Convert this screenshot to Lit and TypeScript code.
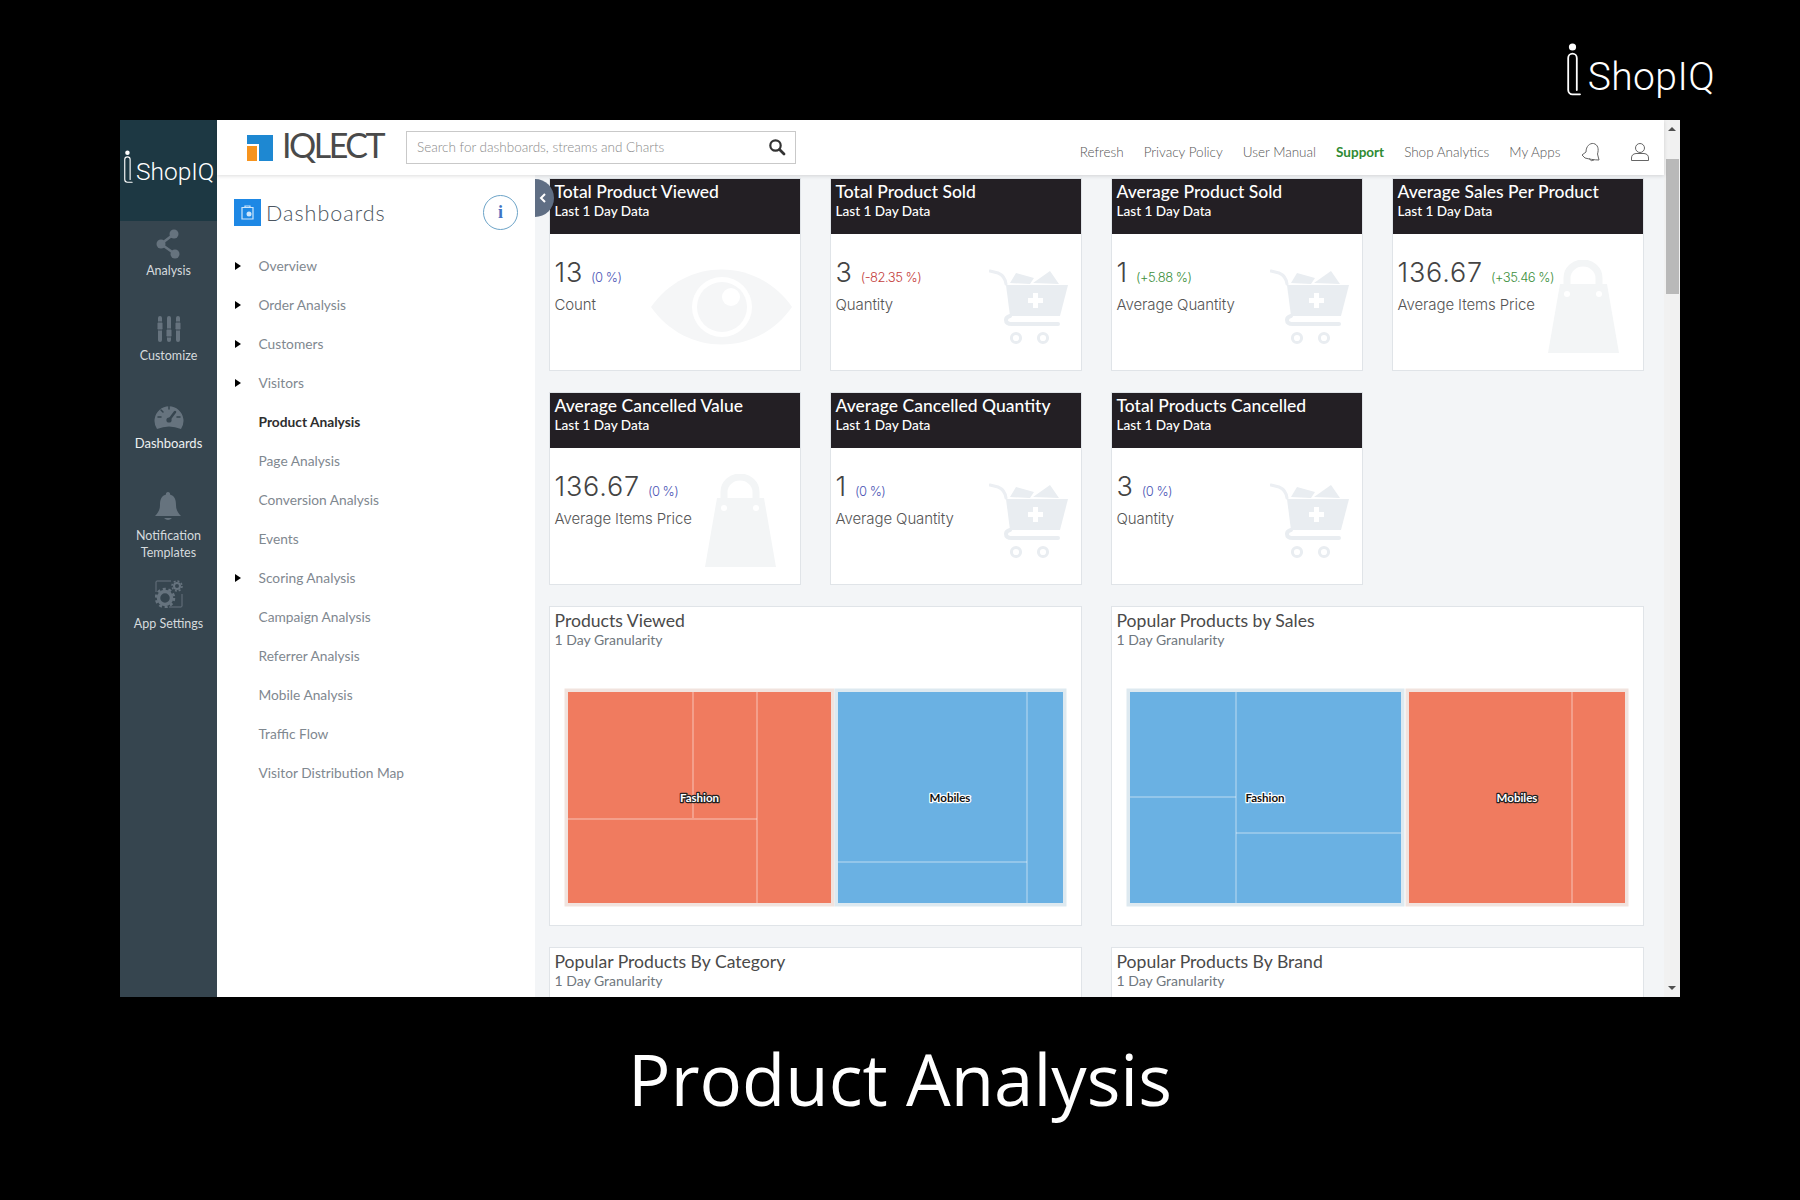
import { LitElement, html, css, svg } from 'lit';
import { customElement } from 'lit/decorators.js';

const cartIcon = html`<svg class="mark cart" width="79" height="76" viewBox="0 0 79 76">
  <path d="M1 2 L9 4 Q16 7 17 15" fill="none" stroke="#eceff3" stroke-width="3" stroke-linecap="round"/>
  <path d="M21 14 L27 4 L45 9 L41 15 Z M44 14 L61 2 L70 15 Z" fill="#e9edf1"/>
  <path d="M17 16 H79 L71 47 H21 Z" fill="#e9edf1"/>
  <path d="M44 24 h5 v5 h5 v5 h-5 v5 h-5 v-5 h-5 v-5 h5 Z" fill="#fff"/>
  <path d="M21 47 Q17 48 17 51 Q17 55 23 55 H69" fill="none" stroke="#e9edf1" stroke-width="4" stroke-linecap="round"/>
  <circle cx="27" cy="69" r="4.6" fill="none" stroke="#e9edf1" stroke-width="3"/>
  <circle cx="54" cy="69" r="4.6" fill="none" stroke="#e9edf1" stroke-width="3"/>
</svg>`;

const bagIcon = html`<svg class="mark bag" width="71" height="94" viewBox="0 0 71 94">
  <path d="M12 24 H59 L71 93 H0 Z" fill="#f3f5f6"/>
  <path d="M19 33 V18 a16 15 0 0 1 32 0 V33" fill="none" stroke="#f3f5f6" stroke-width="7"/>
  <circle cx="19" cy="34" r="3" fill="#fff"/>
  <circle cx="51" cy="34" r="3" fill="#fff"/>
</svg>`;

const eyeIcon = html`<svg class="mark eye" width="141" height="76" viewBox="0 0 141 76">
  <path d="M0 38 C35 -12 106 -12 141 38 C106 88 35 88 0 38 Z" fill="#f5f6f7"/>
  <circle cx="71" cy="38" r="30" fill="#fff"/>
  <circle cx="71" cy="38" r="25" fill="#f5f6f7"/>
  <circle cx="80" cy="28" r="9" fill="#fff"/>
</svg>`;

// big and small wordmark share the same drawn "i"
const logoMark = html`<svg class="logo-i" viewBox="0 0 16 54">
  <circle cx="5.5" cy="4" r="3.6" fill="currentColor"/>
  <path d="M1.2 15 a4.3 4.3 0 0 1 8.6 0 V47 M1.2 15 V47 a4.3 4.3 0 0 0 4.3 4.3 H13" fill="none" stroke="currentColor" stroke-width="1.8" stroke-linecap="round"/>
</svg>`;

const cards = [
  { title: 'Total Product Viewed', value: '13', delta: '(0 %)', tone: 'flat', label: 'Count', icon: eyeIcon },
  { title: 'Total Product Sold', value: '3', delta: '(-82.35 %)', tone: 'down', label: 'Quantity', icon: cartIcon },
  { title: 'Average Product Sold', value: '1', delta: '(+5.88 %)', tone: 'up', label: 'Average Quantity', icon: cartIcon },
  { title: 'Average Sales Per Product', value: '136.67', delta: '(+35.46 %)', tone: 'up', label: 'Average Items Price', icon: bagIcon },
  { title: 'Average Cancelled Value', value: '136.67', delta: '(0 %)', tone: 'flat', label: 'Average Items Price', icon: bagIcon },
  { title: 'Average Cancelled Quantity', value: '1', delta: '(0 %)', tone: 'flat', label: 'Average Quantity', icon: cartIcon },
  { title: 'Total Products Cancelled', value: '3', delta: '(0 %)', tone: 'flat', label: 'Quantity', icon: cartIcon },
];

const menu = [
  { name: 'Overview', arrow: true },
  { name: 'Order Analysis', arrow: true },
  { name: 'Customers', arrow: true },
  { name: 'Visitors', arrow: true },
  { name: 'Product Analysis', active: true },
  { name: 'Page Analysis' },
  { name: 'Conversion Analysis' },
  { name: 'Events' },
  { name: 'Scoring Analysis', arrow: true },
  { name: 'Campaign Analysis' },
  { name: 'Referrer Analysis' },
  { name: 'Mobile Analysis' },
  { name: 'Traffic Flow' },
  { name: 'Visitor Distribution Map' },
];

const links = ['Refresh', 'Privacy Policy', 'User Manual', 'Support', 'Shop Analytics', 'My Apps'];

const ORANGE = '#f07b5f';
const BLUE = '#6ab1e3';
const HALO: Record<string, string> = { [ORANGE]: '#f1e3de', [BLUE]: '#dde9f0' };

type Group = {
  x: number; w: number; fill: string; label: string; labelX: number;
  lines: number[][];
};

// coordinates are relative to the 503x219 plot
const viewed: Group[] = [
  { x: 4, w: 263, fill: ORANGE, label: 'Fashion', labelX: 135.5, lines: [[129, 4, 129, 130], [193, 4, 193, 215], [4, 131, 193, 131]] },
  { x: 274, w: 225, fill: BLUE, label: 'Mobiles', labelX: 386, lines: [[463, 4, 463, 215], [274, 174, 463, 174]] },
];
const sales: Group[] = [
  { x: 4, w: 271, fill: BLUE, label: 'Fashion', labelX: 139, lines: [[110, 4, 110, 215], [4, 109, 110, 109], [110, 145, 275, 145]] },
  { x: 283, w: 216, fill: ORANGE, label: 'Mobiles', labelX: 391, lines: [[446, 4, 446, 215]] },
];

const treemap = (groups: Group[]) => html`<svg class="treemap" width="503" height="219" viewBox="0 0 503 219">
  ${groups.map(g => svg`<rect x=${g.x} y="4" width=${g.w} height="211" fill="none" stroke=${HALO[g.fill]} stroke-width="7"/>`)}
  ${groups.map(g => svg`
    <rect x=${g.x} y="4" width=${g.w} height="211" fill=${g.fill}/>
    ${g.lines.map(l => svg`<line x1=${l[0]} y1=${l[1]} x2=${l[2]} y2=${l[3]} stroke="#fff" stroke-opacity=".55"/>`)}
    <text class=${g.fill === ORANGE ? 'tag on-orange' : 'tag on-blue'} x=${g.labelX} y="114" text-anchor="middle">${g.label}</text>
  `)}
</svg>`;

@customElement('app-root')
export class AppRoot extends LitElement {
  static styles = css`
    :host {
      display: block;
      width: 1800px;
      height: 1200px;
      background: #000;
      font-family: Lato, 'Liberation Sans', sans-serif;
      color: #444;
      overflow: hidden;
    }
    .band {
      height: 120px;
      box-sizing: border-box;
      padding: 43px 85px 0 0;
      display: flex;
      justify-content: flex-end;
    }
    .logo {
      display: flex;
      color: #fff;
      font-family: Roboto, sans-serif;
      font-weight: 300;
    }
    .logo-i { display: block; flex: none; }
    .logo.big { font-size: 39px; line-height: 46px; gap: 5px; letter-spacing: .4px; }
    .logo.big .logo-i { width: 16px; height: 54px; }
    .logo.big span { padding-top: 11px; }
    .logo.small { font-size: 24.5px; line-height: 28px; gap: 2px; }
    .logo.small .logo-i { width: 10px; height: 34px; }
    .logo.small span { padding-top: 8px; }

    .frame {
      width: 1560px;
      height: 877px;
      margin-left: 120px;
      display: flex;
      background: #fff;
    }
    .side {
      width: 97px;
      flex: none;
      background: #36454f;
      color: #d5dadd;
      display: flex;
      flex-direction: column;
      align-items: center;
      font-size: 12.5px;
    }
    .side-logo {
      align-self: stretch;
      height: 101px;
      box-sizing: border-box;
      background: #1d3843;
      padding: 30px 0 0 4px;
    }
    .side-item {
      display: flex;
      flex-direction: column;
      align-items: center;
      text-align: center;
      line-height: 17px;
    }
    .side-item svg { display: block; }
    .side-item.analysis { margin-top: 8px; gap: 3px; }
    .side-item.customize { margin-top: 36px; gap: 4px; }
    .side-item.dashboards { margin-top: 39px; gap: 4px; font-size: 13px; color: #eef1f2; }
    .side-item.notify { margin-top: 39px; gap: 6px; }
    .side-item.settings { margin-top: 19px; gap: 7px; }

    .main { flex: 1; min-width: 0; display: flex; flex-direction: column; }
    .top {
      height: 55px;
      flex: none;
      display: flex;
      align-items: center;
      background: #fff;
      box-shadow: 0 1px 4px rgba(0, 0, 0, .14);
      position: relative;
      z-index: 2;
    }
    .brand { display: flex; align-items: center; margin-left: 30px; gap: 9px; width: 159px; }
    .brand b {
      font-weight: 400;
      font-size: 34px;
      letter-spacing: -2.5px;
      color: #4a4a4a;
      line-height: 34px;
      padding-bottom: 6px;
    }
    .search {
      width: 390px;
      height: 33px;
      margin-bottom: 1px;
      box-sizing: border-box;
      border: 1px solid #c9c9c9;
      display: flex;
      align-items: center;
      padding: 0 9px 0 10px;
    }
    .search input {
      flex: 1;
      border: 0;
      outline: 0;
      padding: 0 0 1px;
      font: 300 13.5px Lato, sans-serif;
      color: #777;
    }
    .search input::placeholder { color: #8a8a8a; opacity: 1; }
    .links {
      margin-left: auto;
      padding: 8px 14.5px 0 0;
      display: flex;
      align-items: center;
      font-size: 13.5px;
      font-weight: 300;
      color: #555;
      gap: 20px;
    }
    .links .support { font-weight: 700; color: #2f8b33; }
    .links svg { display: block; }
    .links .bell { margin-left: 0; }
    .links .user { margin-left: 9px; }

    .body { flex: 1; min-height: 0; display: flex; }
    .panel { width: 318px; flex: none; background: #fff; box-sizing: border-box; padding: 20px 17px 0; }
    .panel-head { display: flex; align-items: center; height: 34px; margin-bottom: 17px; }
    .panel-icon { width: 27px; height: 27px; background: #1e88e5; display: flex; align-items: center; justify-content: center; }
    .panel-head h2 {
      font-size: 21.5px;
      font-weight: 300;
      letter-spacing: 1px;
      margin: 2px 0 0 5px;
      color: #4b5560;
    }
    .info {
      margin-left: auto;
      width: 33px;
      height: 33px;
      border: 1px solid #6da4c8;
      border-radius: 50%;
      display: flex;
      align-items: center;
      justify-content: center;
      font: 700 18px 'Liberation Serif', serif;
      color: #3f73c4;
    }
    .menu { list-style: none; margin: 0; padding: 0; }
    .menu li {
      height: 39px;
      display: flex;
      align-items: center;
      padding-left: 24.5px;
      font-size: 13.75px;
      color: #7f8890;
      position: relative;
    }
    .menu li.active { color: #2e2e2e; font-weight: 700; }
    .menu li.arrow::before {
      content: '';
      position: absolute;
      left: 1px;
      top: 16px;
      border-left: 6px solid #000;
      border-top: 4px solid transparent;
      border-bottom: 4px solid transparent;
    }

    .content {
      flex: 1;
      min-width: 0;
      background: #f3f5f7;
      position: relative;
      overflow: hidden;
      box-sizing: border-box;
      padding: 3px 0 0 14px;
    }
    .collapse {
      position: absolute;
      left: 0;
      top: 4px;
      width: 19px;
      height: 38px;
      border-radius: 0 19px 19px 0;
      background: #5f6e84;
      z-index: 1;
      display: flex;
      align-items: center;
      padding-left: 4px;
      box-sizing: border-box;
    }
    .grid {
      display: grid;
      grid-template-columns: repeat(4, 251.5px);
      grid-auto-rows: min-content;
      column-gap: 29.5px;
      row-gap: 21px;
    }
    .card {
      height: 193px;
      box-sizing: border-box;
      background: #fff;
      border: 1px solid #e0e4e8;
      position: relative;
      overflow: hidden;
    }
    .card header {
      height: 56px;
      margin: -1px -1px 0;
      background: #231f24;
      color: #fff;
      box-sizing: border-box;
      padding: 2px 5.5px 0;
    }
    .card h3 { margin: 0; font-size: 17.5px; font-weight: 500; line-height: 24px; }
    .card header p { margin: 0; font-size: 13.6px; line-height: 15px; font-weight: 500; }
    .stat { padding: 21px 4.5px 0; position: relative; z-index: 1; }
    .nums { display: flex; align-items: baseline; gap: 8px; color: #444; }
    .nums strong { font: 300 27px/36px Inter, sans-serif; letter-spacing: .8px; }
    .nums em { font: 300 13px Inter, sans-serif; letter-spacing: -.5px; }
    .flat { color: #4b55b5; }
    .down { color: #c4403c; }
    .up { color: #3d8f3d; }
    .stat p { margin: 4px 0 0; font: 300 15px/20px Inter, sans-serif; color: #555; letter-spacing: -.1px; }
    .mark { position: absolute; }
    .mark.cart { right: 13px; top: 90px; }
    .mark.bag { right: 24px; top: 81px; }
    .mark.eye { right: 8px; top: 90px; }

    .chart {
      grid-column: span 2;
      height: 320px;
      box-sizing: border-box;
      background: #fff;
      border: 1px solid #e0e4e8;
      padding: 2px 4.5px 0;
    }
    .chart h3 { margin: 0; font-size: 17.6px; font-weight: 400; line-height: 23px; color: #4a4a4a; }
    .chart p { margin: 0; font-size: 14px; line-height: 15px; color: #6f777e; }
    .treemap { display: block; margin: 41px 0 0 9.5px; }
    .tag {
      font: 700 11.5px Lato, sans-serif;
      paint-order: stroke;
      stroke-width: 2.5px;
      stroke-linejoin: round;
    }
    .tag.on-orange { fill: #fff; stroke: #222; }
    .tag.on-blue { fill: #111; stroke: #fff; }

    .bar {
      width: 16px;
      flex: none;
      background: #f1f1f1;
      display: flex;
      flex-direction: column;
      align-items: center;
      padding-top: 7px;
      box-sizing: border-box;
      position: relative;
    }
    .up-arrow, .down-arrow {
      width: 0;
      border-left: 4px solid transparent;
      border-right: 4px solid transparent;
    }
    .up-arrow { border-bottom: 4px solid #505050; }
    .down-arrow { border-top: 4px solid #505050; margin-top: auto; margin-bottom: 7px; }
    .thumb { width: 13px; height: 135px; background: #b9b9b9; margin-top: 28px; }

    .caption {
      text-align: center;
      color: #fff;
      font: 400 70.7px/1 'Open Sans', sans-serif;
      margin-top: 47px;
    }
  `;

  renderCard(c: (typeof cards)[number]) {
    return html`<section class="card">
      <header>
        <h3>${c.title}</h3>
        <p>Last 1 Day Data</p>
      </header>
      ${c.icon}
      <div class="stat">
        <div class="nums"><strong>${c.value}</strong><em class=${c.tone}>${c.delta}</em></div>
        <p>${c.label}</p>
      </div>
    </section>`;
  }

  render() {
    const ic = '#66737e';
    return html`
      <div class="band">
        <div class="logo big">${logoMark}<span>ShopIQ</span></div>
      </div>
      <div class="frame">
        <aside class="side">
          <div class="side-logo"><div class="logo small">${logoMark}<span>ShopIQ</span></div></div>
          <div class="side-item analysis">
            <svg width="26" height="30" viewBox="0 0 26 30">
              <path d="M19 5 L6 15 L20 25" fill="none" stroke=${ic} stroke-width="2.5"/>
              <circle cx="19" cy="5" r="4.5" fill=${ic}/><circle cx="6" cy="15" r="4.5" fill=${ic}/><circle cx="20" cy="25" r="4.5" fill=${ic}/>
            </svg>
            Analysis
          </div>
          <div class="side-item customize">
            <svg width="26" height="28" viewBox="0 0 26 28">
              <g fill=${ic}>
                <rect x="2" y="1" width="4" height="26" rx="2"/><rect x="11" y="1" width="4" height="26" rx="2"/><rect x="20" y="1" width="4" height="26" rx="2"/>
                <rect x="1" y="7" width="6" height="8" rx="1.5" stroke="#36454f"/><rect x="10" y="14" width="6" height="8" rx="1.5" stroke="#36454f"/><rect x="19" y="7" width="6" height="8" rx="1.5" stroke="#36454f"/>
              </g>
            </svg>
            Customize
          </div>
          <div class="side-item dashboards">
            <svg width="30" height="28" viewBox="0 0 30 28">
              <path d="M3 26 A14.5 14.5 0 1 1 27 26 Q15 21 3 26 Z" fill=${ic}/>
              <path d="M15 17 L21 9" stroke="#36454f" stroke-width="2.5" stroke-linecap="round"/>
              <circle cx="15" cy="17" r="2.6" fill="#36454f"/>
              <g stroke="#36454f" stroke-width="1.5" stroke-linecap="round"><path d="M15 3v3M7 7l2 2M4 14h3M26 14h-3"/></g>
            </svg>
            Dashboards
          </div>
          <div class="side-item notify">
            <svg width="26" height="30" viewBox="0 0 26 30">
              <path d="M13 1 a2 2 0 0 1 2 2.5 C20 5 21 9 21 14 C21 19 23 22 26 25 H0 C3 22 5 19 5 14 C5 9 6 5 11 3.5 A2 2 0 0 1 13 1 Z" fill=${ic}/>
              <path d="M9 27 H17 Q13 31 9 27 Z" fill=${ic}/>
            </svg>
            <span>Notification<br />Templates</span>
          </div>
          <div class="side-item settings">
            <svg width="28" height="28" viewBox="0 0 28 28">
              <path d="M16 1 H2 Q1 1 1 2 V12 M27 14 V26 Q27 27 26 27 H14" fill="none" stroke=${ic}/>
              <circle cx="10" cy="18" r="6.5" fill="none" stroke=${ic} stroke-width="3.5"/>
              <circle cx="10" cy="18" r="9" fill="none" stroke=${ic} stroke-width="2.5" stroke-dasharray="3 2.7"/>
              <circle cx="22" cy="6" r="3" fill="none" stroke=${ic} stroke-width="2"/>
              <circle cx="22" cy="6" r="5" fill="none" stroke=${ic} stroke-width="1.5" stroke-dasharray="2 1.9"/>
            </svg>
            App Settings
          </div>
        </aside>
        <div class="main">
          <div class="top">
            <div class="brand">
              <svg width="26" height="26" viewBox="0 0 26 26">
                <path d="M0 0 H26 V26 H12 V9 H0 Z" fill="#1e88d2"/>
                <rect y="11" width="10" height="15" fill="#f7941e"/>
              </svg>
              <b>IQLECT</b>
            </div>
            <div class="search">
              <input placeholder="Search for dashboards, streams and Charts" />
              <svg width="18" height="18" viewBox="0 0 18 18">
                <circle cx="7.5" cy="7.5" r="5.2" fill="none" stroke="#333" stroke-width="2.2"/>
                <path d="M11.5 11.5 L16 16" stroke="#333" stroke-width="2.8" stroke-linecap="round"/>
              </svg>
            </div>
            <nav class="links">
              ${links.map(l => html`<span class=${l === 'Support' ? 'support' : ''}>${l}</span>`)}
              <svg class="bell" width="20" height="20" viewBox="0 0 20 20">
                <path d="M1 13 L5 10 C5 4 9 1 12.5 1.5 C17 2.5 18 7 16.5 12 L18 18 C13 18 8 17 4 16 Z M8 16.5 Q10 20 13 18" fill="none" stroke="#666" stroke-width="1"/>
              </svg>
              <svg class="user" width="20" height="20" viewBox="0 0 20 20">
                <circle cx="10" cy="6" r="4.5" fill="none" stroke="#666"/>
                <path d="M1.5 18.5 V16 Q1.5 12 6 11.5 H14 Q18.5 12 18.5 16 V18.5 Z" fill="none" stroke="#666"/>
              </svg>
            </nav>
          </div>
          <div class="body">
            <div class="panel">
              <div class="panel-head">
                <div class="panel-icon">
                  <svg width="17" height="17" viewBox="0 0 17 17">
                    <path d="M3 3.5 H14 V15 H3 Z M6 3.5 V2 H11 V3.5" fill="none" stroke="#cfe6fb" stroke-width="1.2"/>
                    <circle cx="10" cy="10" r="2.5" fill="#cfe6fb"/>
                  </svg>
                </div>
                <h2>Dashboards</h2>
                <div class="info">i</div>
              </div>
              <ul class="menu">
                ${menu.map(m => html`<li class="${m.arrow ? 'arrow' : ''} ${m.active ? 'active' : ''}">${m.name}</li>`)}
              </ul>
            </div>
            <div class="content">
              <div class="collapse">
                <svg width="8" height="10" viewBox="0 0 8 10">
                  <path d="M6 1 L2 5 L6 9" fill="none" stroke="#fff" stroke-width="2"/>
                </svg>
              </div>
              <div class="grid">
                ${cards.map(c => this.renderCard(c))}
                <div class="spacer"></div>
                <section class="chart">
                  <h3>Products Viewed</h3>
                  <p>1 Day Granularity</p>
                  ${treemap(viewed)}
                </section>
                <section class="chart">
                  <h3>Popular Products by Sales</h3>
                  <p>1 Day Granularity</p>
                  ${treemap(sales)}
                </section>
                <section class="chart">
                  <h3>Popular Products By Category</h3>
                  <p>1 Day Granularity</p>
                </section>
                <section class="chart">
                  <h3>Popular Products By Brand</h3>
                  <p>1 Day Granularity</p>
                </section>
              </div>
            </div>
          </div>
        </div>
        <div class="bar">
          <div class="up-arrow"></div>
          <div class="thumb"></div>
          <div class="down-arrow"></div>
        </div>
      </div>
      <div class="caption">Product Analysis</div>
    `;
  }
}
